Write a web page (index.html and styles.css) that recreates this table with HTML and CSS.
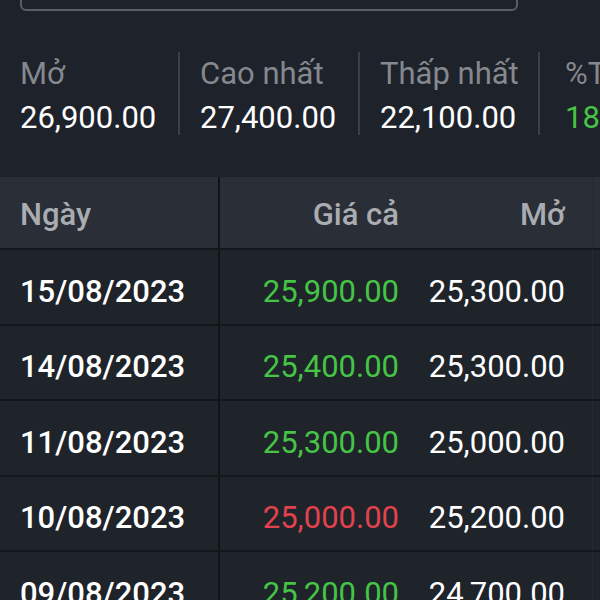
FILE: index.html
```html
<!DOCTYPE html>
<html lang="vi">
<head>
<meta charset="utf-8">
<title>Lịch sử giá</title>
<link rel="stylesheet" href="styles.css">
</head>
<body>
<div class="search-box"></div>

<div class="stats">
  <div class="stat">
    <div class="stat-label">Mở</div>
    <div class="stat-value">26,900.00</div>
  </div>
  <div class="stat">
    <div class="stat-label">Cao nhất</div>
    <div class="stat-value">27,400.00</div>
  </div>
  <div class="stat">
    <div class="stat-label">Thấp nhất</div>
    <div class="stat-value">22,100.00</div>
  </div>
  <div class="stat last">
    <div class="stat-label">%T</div>
    <div class="stat-value up">18</div>
  </div>
</div>

<div class="table">
  <div class="row head">
    <div class="cell date">Ngày</div>
    <div class="cell price">Giá cả</div>
    <div class="cell open">Mở</div>
    <div class="cell more"></div>
  </div>
  <div class="row">
    <div class="cell date">15/08/2023</div>
    <div class="cell price up">25,900.00</div>
    <div class="cell open">25,300.00</div>
    <div class="cell more"></div>
  </div>
  <div class="row">
    <div class="cell date">14/08/2023</div>
    <div class="cell price up">25,400.00</div>
    <div class="cell open">25,300.00</div>
    <div class="cell more"></div>
  </div>
  <div class="row">
    <div class="cell date">11/08/2023</div>
    <div class="cell price up">25,300.00</div>
    <div class="cell open">25,000.00</div>
    <div class="cell more"></div>
  </div>
  <div class="row">
    <div class="cell date">10/08/2023</div>
    <div class="cell price down">25,000.00</div>
    <div class="cell open">25,200.00</div>
    <div class="cell more"></div>
  </div>
  <div class="row">
    <div class="cell date">09/08/2023</div>
    <div class="cell price up">25,200.00</div>
    <div class="cell open">24,700.00</div>
    <div class="cell more"></div>
  </div>
</div>
</body>
</html>
```

FILE: styles.css
```css
* { box-sizing: border-box; }

html, body {
  margin: 0;
  padding: 0;
  background: #1e222a;
  width: 600px;
  height: 600px;
  overflow: hidden;
  font-family: Roboto, "Noto Sans", sans-serif;
  color: #ffffff;
}

.search-box {
  width: 498px;
  height: 42px;
  margin: -31px 0 0 20px;
  border: 2px solid #5a5e66;
  border-radius: 6px;
}

.stats {
  display: flex;
  margin-top: 41px;
  height: 83px;
  white-space: nowrap;
}

.stat {
  flex: 0 0 180px;
  height: 83px;
  padding-left: 20px;
  border-right: 2px solid #3b3f46;
  font-size: 31px;
  line-height: 44px;
}

.stat.last {
  flex: 0 0 60px;
  padding-left: 25px;
  border-right: none;
}

.stat-label {
  color: #85888e;
}

.stat-value {
  color: #ffffff;
}

.up { color: #45c446; }
.down { color: #e2424e; }

.table {
  margin-top: 42px;
}

.row {
  display: flex;
  height: 75.5px;
  background: #1f232a;
  border-bottom: 2px solid #13161a;
  font-size: 31px;
  white-space: nowrap;
}

.row.head {
  height: 73px;
  background: #2a2e36;
}

.cell {
  display: flex;
  align-items: center;
  padding-top: 9px;
}

.row.head .cell {
  padding-top: 3px;
  color: #a9acb1;
  font-weight: 500;
}

.cell.date {
  flex: 0 0 220px;
  padding-left: 20px;
  border-right: 2px solid #101317;
  font-weight: 500;
}

.cell.price {
  flex: 0 0 200px;
  justify-content: flex-end;
  padding-right: 21px;
}

.cell.open {
  flex: 0 0 172px;
  justify-content: flex-end;
  padding-right: 27px;
}

.cell.more {
  flex: 0 0 8px;
  border-left: 1px solid #262a31;
}
```
